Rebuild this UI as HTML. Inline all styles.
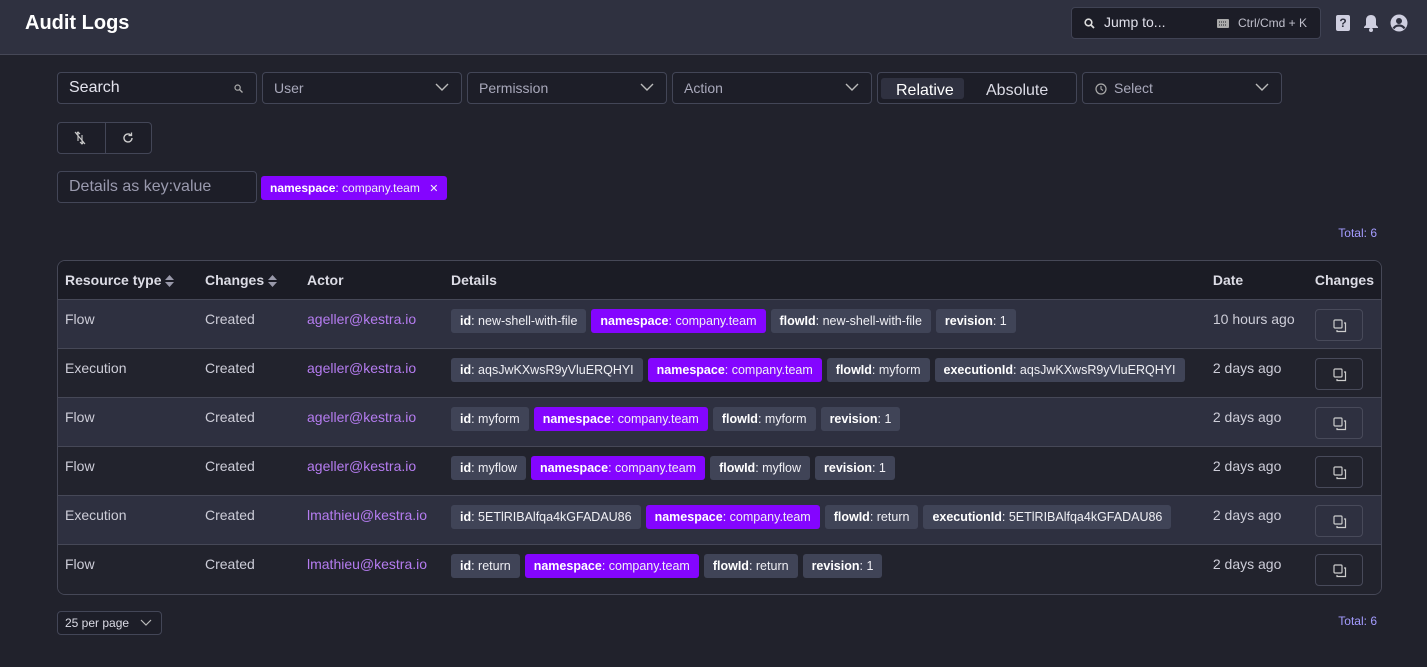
<!DOCTYPE html>
<html><head><meta charset="utf-8"><style>
*{box-sizing:border-box;margin:0;padding:0}
body{width:1427px;height:667px;background:#21222c;font-family:"Liberation Sans",sans-serif;color:#cdcdd8;position:relative;overflow:hidden}
.top{position:absolute;left:0;top:0;width:1427px;height:55px;background:#2f3140;border-bottom:1px solid #464857}
.top h1{position:absolute;left:25px;top:12px;font-size:20px;color:#fff;font-weight:bold}
.jump{position:absolute;left:1071px;top:7px;width:250px;height:32px;background:#1c1d27;border:1px solid #404354;border-radius:4px;font-size:14px;color:#e0e0ea}
.box{position:absolute;height:32px;border:1px solid #434657;border-radius:4px;background:#1d1e28;font-size:14px;color:#a9a9bb;padding:0 11px;line-height:30px}
.chev{position:absolute;right:12px;top:9px}
.tag{display:inline-block;height:24px;line-height:24px;padding:0 9px;border-radius:3px;font-size:12.5px;color:#f0f0f5;background:#404457;margin-right:5px}
.tag b{color:#fff}
.tag.p{background:#8405ff}
table{position:absolute;left:57px;top:260px;width:1325px;border-collapse:separate;border-spacing:0;border:1px solid #464857;border-radius:8px;overflow:hidden;font-size:14px}
th{background:#1b1c25;height:39px;text-align:left;padding:0 7px;color:#dcdce5;font-weight:bold;border-bottom:1px solid #464857}
td{height:49px;vertical-align:top;padding:11px 7px 0;border-bottom:1px solid #464857}
tr:last-child td{border-bottom:none}
tr.l td{background:#2e3040}
tr.d td{background:#22232d}
td.tg{padding-top:9px;padding-left:7px}
a{color:#b57cf0;text-decoration:none}
.cb{width:48px;height:32px;border:1px solid #484a5a;border-radius:4px;margin-top:-2px;position:relative}
.sort{display:inline-block;vertical-align:middle;margin-left:4px}
</style></head><body>
<div class="top"><h1>Audit Logs</h1>
<div class="jump">
<svg style="position:absolute;left:12px;top:10px" width="11" height="11" viewBox="0 0 11 11"><circle cx="4.5" cy="4.5" r="3.3" stroke="#ddd" stroke-width="1.6" fill="none"/><path d="M7 7l3 3" stroke="#ddd" stroke-width="1.8"/></svg>
<span style="position:absolute;left:32px;top:6px">Jump to...</span>
<svg style="position:absolute;left:145px;top:11px" width="12" height="9"><rect width="12" height="9" rx="1" fill="#aaa"/><path d="M2 3h8M2 6h8" stroke="#1c1d27" stroke-width="1" stroke-dasharray="1 1"/></svg>
<span style="position:absolute;left:166px;top:8px;font-size:12px;color:#c0c0cc">Ctrl/Cmd + K</span></div>
<div style="position:absolute;left:1336px;top:15px;width:14px;height:16px;background:#cfcfe0;border-radius:2px;color:#2f3140;font-size:12px;font-weight:bold;text-align:center;line-height:16px">?</div>
<svg style="position:absolute;left:1363px;top:14px" width="16" height="18" viewBox="0 0 16 18"><path d="M8 1c-3 0-5 2-5 5v5l-2 2v1h14v-1l-2-2V6c0-3-2-5-5-5z" fill="#cfcfe0"/><circle cx="8" cy="16" r="2" fill="#cfcfe0"/></svg>
<svg style="position:absolute;left:1390px;top:14px" width="18" height="18" viewBox="0 0 18 18"><circle cx="9" cy="9" r="8.5" fill="#cfcfe0"/><circle cx="9" cy="7" r="3" fill="#2f3140"/><path d="M3.5 14.5c1.5-2.5 3.5-3 5.5-3s4 .5 5.5 3" stroke="#2f3140" stroke-width="2.2" fill="none"/></svg>
</div>

<div class="box" style="left:57px;top:72px;width:200px;color:#e4e4ee;font-size:16px">Search
<svg style="position:absolute;right:13px;top:11px" width="9" height="9"><circle cx="3.6" cy="3.6" r="2.6" stroke="#aaa" stroke-width="1.2" fill="none"/><path d="M5.5 5.5l3 3" stroke="#aaa" stroke-width="1.3"/></svg></div>
<div class="box" style="left:262px;top:72px;width:200px">User<svg class="chev" width="14" height="10"><path d="M1 2l6 6 6-6" stroke="#bbb" stroke-width="1.4" fill="none"/></svg></div>
<div class="box" style="left:467px;top:72px;width:200px">Permission<svg class="chev" width="14" height="10"><path d="M1 2l6 6 6-6" stroke="#bbb" stroke-width="1.4" fill="none"/></svg></div>
<div class="box" style="left:672px;top:72px;width:200px">Action<svg class="chev" width="14" height="10"><path d="M1 2l6 6 6-6" stroke="#bbb" stroke-width="1.4" fill="none"/></svg></div>
<div class="box" style="left:877px;top:72px;width:200px;padding:0">
<div style="position:absolute;left:3px;top:5px;width:83px;height:21px;background:#2f3140;border-radius:3px"></div>
<span style="position:absolute;left:18px;top:3px;color:#fff;font-size:16px">Relative</span>
<span style="position:absolute;left:108px;top:3px;color:#dcdce6;font-size:16px">Absolute</span></div>
<div class="box" style="left:1082px;top:72px;width:200px;padding-left:31px">
<svg style="position:absolute;left:12px;top:10px" width="12" height="12"><circle cx="6" cy="6" r="5" stroke="#aaa" stroke-width="1.2" fill="none"/><path d="M6 3v3l2 1.5" stroke="#aaa" stroke-width="1.1" fill="none"/></svg>Select<svg class="chev" width="14" height="10"><path d="M1 2l6 6 6-6" stroke="#bbb" stroke-width="1.4" fill="none"/></svg></div>

<div class="box" style="left:57px;top:122px;width:95px;padding:0">
<div style="position:absolute;left:47px;top:0;width:1px;height:30px;background:#434657"></div>
<svg style="position:absolute;left:16px;top:8px" width="12" height="14" viewBox="0 0 12 14"><path d="M2 3l2-2 2 2M4 1v9M10 11l-2 2-2-2M8 13V4M1 1l10 12" stroke="#ccc" stroke-width="1.1" fill="none"/></svg>
<svg style="position:absolute;left:64px;top:9px" width="12" height="12" viewBox="0 0 12 12"><path d="M10 6a4 4 0 1 1-1.3-3" stroke="#ccc" stroke-width="1.4" fill="none"/><path d="M9.5 0.5v3h-3" stroke="#ccc" stroke-width="1.3" fill="none"/></svg></div>
<div class="box" style="left:57px;top:171px;width:200px;font-size:16px;color:#9a9aae">Details as key:value</div>
<div class="tag p" style="position:absolute;left:261px;top:176px;height:24px;padding:0 9px;font-size:12px"><b>namespace</b>: company.team <span style="margin-left:6px;font-size:11px">✕</span></div>
<div style="position:absolute;right:50px;top:226px;font-size:12px;color:#a49cff">Total: 6</div>

<table>
<tr><th style="width:140px">Resource type<svg class="sort" width="9" height="12"><path d="M0 5l4.5-5 4.5 5zM0 7l4.5 5 4.5-5z" fill="#9999aa"/></svg></th><th style="width:102px">Changes<svg class="sort" width="9" height="12"><path d="M0 5l4.5-5 4.5 5zM0 7l4.5 5 4.5-5z" fill="#9999aa"/></svg></th><th style="width:144px">Actor</th><th>Details</th><th style="width:102px">Date</th><th style="width:70px">Changes</th></tr>
<tr class="l"><td>Flow</td><td>Created</td><td><a>ageller@kestra.io</a></td><td class="tg"><span class="tag"><b>id</b>: new-shell-with-file</span><span class="tag p"><b>namespace</b>: company.team</span><span class="tag"><b>flowId</b>: new-shell-with-file</span><span class="tag"><b>revision</b>: 1</span></td><td>10 hours ago</td><td><div class="cb"><svg style="position:absolute;left:17px;top:9px" width="14" height="14" viewBox="0 0 14 14"><rect x="1" y="1" width="8" height="8" rx="1" stroke="#ccc" fill="none" stroke-width="1.2"/><path d="M11 4h1.5v8.5H4V11" stroke="#ccc" fill="none" stroke-width="1.2"/></svg></div></td></tr>
<tr class="d"><td>Execution</td><td>Created</td><td><a>ageller@kestra.io</a></td><td class="tg"><span class="tag"><b>id</b>: aqsJwKXwsR9yVluERQHYI</span><span class="tag p"><b>namespace</b>: company.team</span><span class="tag"><b>flowId</b>: myform</span><span class="tag"><b>executionId</b>: aqsJwKXwsR9yVluERQHYI</span></td><td>2 days ago</td><td><div class="cb"><svg style="position:absolute;left:17px;top:9px" width="14" height="14" viewBox="0 0 14 14"><rect x="1" y="1" width="8" height="8" rx="1" stroke="#ccc" fill="none" stroke-width="1.2"/><path d="M11 4h1.5v8.5H4V11" stroke="#ccc" fill="none" stroke-width="1.2"/></svg></div></td></tr>
<tr class="l"><td>Flow</td><td>Created</td><td><a>ageller@kestra.io</a></td><td class="tg"><span class="tag"><b>id</b>: myform</span><span class="tag p"><b>namespace</b>: company.team</span><span class="tag"><b>flowId</b>: myform</span><span class="tag"><b>revision</b>: 1</span></td><td>2 days ago</td><td><div class="cb"><svg style="position:absolute;left:17px;top:9px" width="14" height="14" viewBox="0 0 14 14"><rect x="1" y="1" width="8" height="8" rx="1" stroke="#ccc" fill="none" stroke-width="1.2"/><path d="M11 4h1.5v8.5H4V11" stroke="#ccc" fill="none" stroke-width="1.2"/></svg></div></td></tr>
<tr class="d"><td>Flow</td><td>Created</td><td><a>ageller@kestra.io</a></td><td class="tg"><span class="tag"><b>id</b>: myflow</span><span class="tag p"><b>namespace</b>: company.team</span><span class="tag"><b>flowId</b>: myflow</span><span class="tag"><b>revision</b>: 1</span></td><td>2 days ago</td><td><div class="cb"><svg style="position:absolute;left:17px;top:9px" width="14" height="14" viewBox="0 0 14 14"><rect x="1" y="1" width="8" height="8" rx="1" stroke="#ccc" fill="none" stroke-width="1.2"/><path d="M11 4h1.5v8.5H4V11" stroke="#ccc" fill="none" stroke-width="1.2"/></svg></div></td></tr>
<tr class="l"><td>Execution</td><td>Created</td><td><a>lmathieu@kestra.io</a></td><td class="tg"><span class="tag"><b>id</b>: 5ETlRIBAlfqa4kGFADAU86</span><span class="tag p"><b>namespace</b>: company.team</span><span class="tag"><b>flowId</b>: return</span><span class="tag"><b>executionId</b>: 5ETlRIBAlfqa4kGFADAU86</span></td><td>2 days ago</td><td><div class="cb"><svg style="position:absolute;left:17px;top:9px" width="14" height="14" viewBox="0 0 14 14"><rect x="1" y="1" width="8" height="8" rx="1" stroke="#ccc" fill="none" stroke-width="1.2"/><path d="M11 4h1.5v8.5H4V11" stroke="#ccc" fill="none" stroke-width="1.2"/></svg></div></td></tr>
<tr class="d"><td>Flow</td><td>Created</td><td><a>lmathieu@kestra.io</a></td><td class="tg"><span class="tag"><b>id</b>: return</span><span class="tag p"><b>namespace</b>: company.team</span><span class="tag"><b>flowId</b>: return</span><span class="tag"><b>revision</b>: 1</span></td><td>2 days ago</td><td><div class="cb"><svg style="position:absolute;left:17px;top:9px" width="14" height="14" viewBox="0 0 14 14"><rect x="1" y="1" width="8" height="8" rx="1" stroke="#ccc" fill="none" stroke-width="1.2"/><path d="M11 4h1.5v8.5H4V11" stroke="#ccc" fill="none" stroke-width="1.2"/></svg></div></td></tr>
</table>

<div class="box" style="left:57px;top:611px;width:105px;height:24px;line-height:22px;padding:0 7px;font-size:12px;color:#dcdce6">25 per page<svg style="position:absolute;right:9px;top:7px" width="12" height="8"><path d="M1 1l5 5 5-5" stroke="#bbb" stroke-width="1.2" fill="none"/></svg></div>
<div style="position:absolute;right:50px;top:614px;font-size:12px;color:#a49cff">Total: 6</div>
</body></html>
